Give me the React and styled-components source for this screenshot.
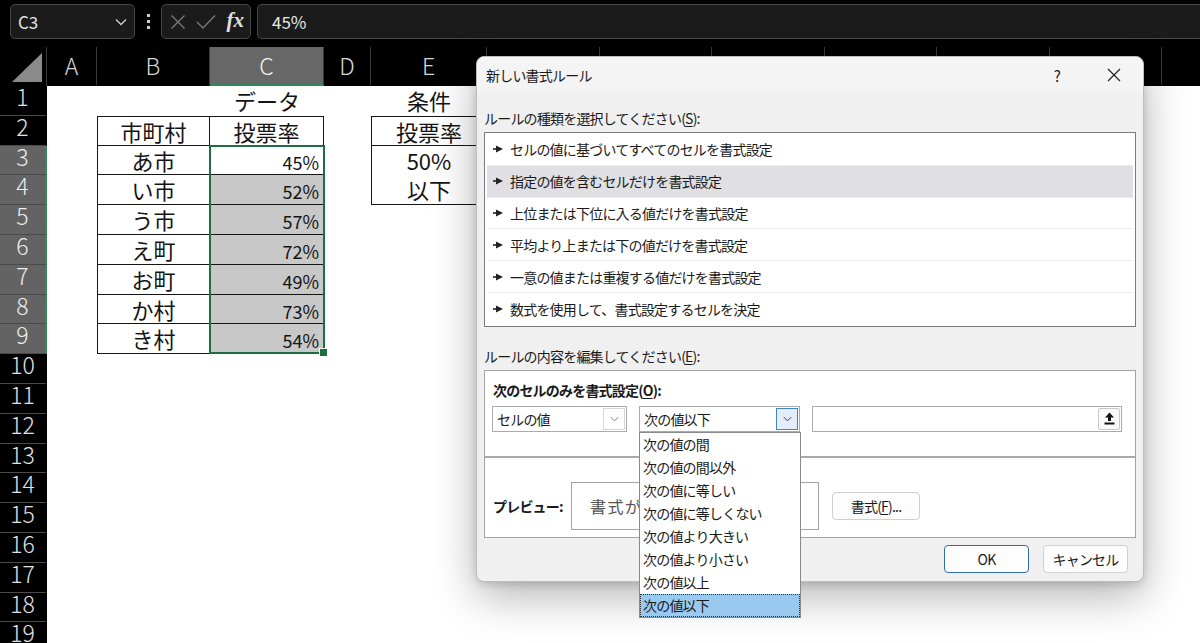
import React from 'react'
import styled, { createGlobalStyle } from 'styled-components'

const GlobalStyle = createGlobalStyle`
  html, body {
    margin: 0;
    padding: 0;
    background: #000;
    overflow: hidden;
  }
  * { box-sizing: border-box; }
`

const COL_TEMPLATE = '47px 50px 113px 114px 47px 116px repeat(7, 112.5px)'
const ROW_H = 29.8

const Page = styled.div`
  position: relative;
  width: 1200px;
  height: 643px;
  overflow: hidden;
  background: #000;
  font-family: "Noto Sans CJK JP", "Noto Sans", sans-serif;
`

/* ---------- formula bar ---------- */

const FormulaBar = styled.div`
  display: flex;
  align-items: stretch;
  height: 47px;
  padding: 4px 0 8px 10px;
`

const NameBox = styled.div`
  width: 125px;
  display: flex;
  align-items: center;
  justify-content: space-between;
  padding: 0 7px 0 7px;
  background: #1b1b1b;
  border: 1px solid #474747;
  border-radius: 5px;
  color: #e6e6e6;
  font-size: 17px;
`

const Dots = styled.div`
  width: 26px;
  display: flex;
  flex-direction: column;
  align-items: center;
  justify-content: center;
  gap: 3px;

  span {
    width: 3px;
    height: 3px;
    background: #cfcfcf;
  }
`

const FxBox = styled.div`
  width: 90px;
  display: flex;
  align-items: center;
  justify-content: space-between;
  padding: 0 6px 0 8px;
  background: #1b1b1b;
  border: 1px solid #474747;
  border-radius: 5px;
`

const Fx = styled.span`
  font-family: "Liberation Serif", "DejaVu Serif", serif;
  font-style: italic;
  font-weight: bold;
  font-size: 21px;
  color: #e0e0e0;
  line-height: 1;
  padding-bottom: 3px;
`

const FormulaInput = styled.div`
  flex: 1;
  margin-left: 6px;
  display: flex;
  align-items: center;
  padding-left: 14px;
  background: #1b1b1b;
  border: 1px solid #474747;
  border-right: 0;
  border-radius: 5px 0 0 5px;
  color: #e6e6e6;
  font-size: 17px;
`

/* ---------- sheet ---------- */

const HeaderRow = styled.div`
  display: grid;
  grid-template-columns: ${COL_TEMPLATE};
  grid-template-rows: 39px;
  height: 39px;
`

const Corner = styled.div`
  display: flex;
  align-items: flex-end;
  justify-content: flex-end;
  padding: 0 3px 3px 0;
  border-right: 1px solid #3a3a3a;
`

const ColHead = styled.div`
  text-align: center;
  font-size: 23px;
  font-weight: 300;
  line-height: 36px;
  color: ${p => (p.$sel ? '#f2f2f2' : '#d8d8d8')};
  background: ${p => (p.$sel ? '#676767' : '#000')};
  border-right: 1px solid #3a3a3a;
  border-bottom: 2px solid ${p => (p.$sel ? '#2f8a58' : '#000')};
`

const SheetRow = styled.div`
  display: grid;
  grid-template-columns: ${COL_TEMPLATE};
  grid-template-rows: ${ROW_H}px;
  height: ${ROW_H}px;
`

const RowHead = styled.div`
  min-height: 0;
  text-align: center;
  font-size: 23px;
  font-weight: 300;
  line-height: 21px;
  color: ${p => (p.$sel ? '#ececec' : '#e2e2e2')};
  background: ${p => (p.$sel ? '#636363' : '#000')};
  border-bottom: 1px solid #4a4a4a;
  border-right: 2px solid ${p => (p.$sel ? '#2f8a58' : '#000')};
  overflow: hidden;
`

const line = '1px solid #151515'

const Cell = styled.div`
  position: relative;
  min-height: 0;
  background: ${p => (p.$fill ? '#c8c8c8' : '#fff')};
  border-top: ${p => (p.$t ? line : '0')};
  border-right: ${p => (p.$r ? line : '0')};
  border-bottom: ${p => (p.$b ? line : '0')};
  border-left: ${p => (p.$l ? line : '0')};
  font-size: ${p => (p.$num ? '18px' : '22px')};
  text-align: ${p => p.$align || 'center'};
  padding: ${p => (p.$num ? '3px 4px 0 3px' : '1px 0 0')};
  line-height: 27px;
  white-space: nowrap;
  color: #141414;
`

const SelectionFrame = styled.div`
  position: absolute;
  left: -1px;
  top: -1px;
  width: 116px;
  height: ${ROW_H * 7 + 1}px;
  border: 2px solid #1f6e43;
  pointer-events: none;
  z-index: 1;

  &::after {
    content: '';
    position: absolute;
    right: -5px;
    bottom: -5px;
    width: 7px;
    height: 7px;
    background: #1f6e43;
    border: 1px solid #fff;
  }
`

/* ---------- dialog ---------- */

const Dialog = styled.div`
  position: absolute;
  left: 476px;
  top: 56px;
  width: 668px;
  height: 526px;
  display: flex;
  flex-direction: column;
  background: #f0f0f0;
  border: 1px solid #bdbdbd;
  border-radius: 8px;
  box-shadow: 0 14px 44px rgba(0, 0, 0, 0.3), 0 2px 8px rgba(0, 0, 0, 0.15);
  font-family: "Noto Sans CJK JP", "Noto Sans", sans-serif;
  font-size: 14px;
  letter-spacing: -0.8px;
  color: #1a1a1a;
  z-index: 3;
`

const TitleBar = styled.div`
  height: 36px;
  display: flex;
  align-items: center;
  padding-left: 9px;
  padding-right: 6px;
  background: #f4f4f4;
  border-radius: 8px 8px 0 0;
`

const Title = styled.div`
  flex: 1;
`

const TitleButton = styled.div`
  width: 46px;
  height: 30px;
  display: flex;
  align-items: center;
  justify-content: center;
  font-size: 15px;
  margin-left: ${p => (p.$gap ? '11px' : '0')};
`

const Body = styled.div`
  flex: 1;
  display: flex;
  flex-direction: column;
  padding: 0 7px;
`

const Label = styled.div`
  line-height: 20px;
  margin-top: ${p => p.$mt}px;
  margin-bottom: 4px;

  u { text-underline-offset: 2px; }
`

const RuleList = styled.div`
  background: #fff;
  border: 1px solid #7c7c7c;
  padding: 1px 2px;
`

const RuleRow = styled.div`
  height: 31.8px;
  display: flex;
  align-items: center;
  gap: 7px;
  padding-left: 6px;
  background: ${p => (p.$active ? '#dfdfe4' : '#fff')};
  border-bottom: ${p => (p.$last ? '0' : '1px solid #ececec')};
`

const EditBox = styled.div`
  background: #fff;
  border: 1px solid #a3a3a3;
`

const EditTop = styled.div`
  padding: 9px 13px 24px 7px;
`

const Heading = styled.div`
  font-weight: bold;
  line-height: 20px;
  margin-left: 1px;

  u { text-underline-offset: 2px; }
`

const SelectRow = styled.div`
  display: flex;
  gap: 12px;
  margin-top: 6px;
`

const Select = styled.div`
  position: relative;
  width: ${p => p.$w}px;
  height: 26px;
  display: flex;
  align-items: stretch;
  background: #fff;
  border: 1px solid #ababab;
`

const SelectText = styled.div`
  flex: 1;
  display: flex;
  align-items: center;
  padding-left: 4px;
`

const SelectButton = styled.div`
  width: 22px;
  margin: 1px;
  display: flex;
  align-items: center;
  justify-content: center;
  border: 1px solid ${p => (p.$active ? '#3f86c4' : '#d6d6d6')};
  background: ${p => (p.$active ? '#e3eefa' : '#fff')};
`

const RefInput = styled.div`
  flex: 1;
  height: 26px;
  display: flex;
  justify-content: flex-end;
  background: #fff;
  border: 1px solid #ababab;
`

const RefButton = styled.div`
  width: 22px;
  margin: 1px;
  display: flex;
  align-items: center;
  justify-content: center;
  background: #fafafa;
  border: 1px solid #c9c9c9;
  border-radius: 2px;
`

const DropList = styled.div`
  position: absolute;
  left: -1px;
  top: 25px;
  width: 162px;
  background: #fff;
  border: 1px solid #8a8a8a;
  z-index: 2;
`

const DropItem = styled.div`
  height: 23px;
  line-height: 23px;
  padding-left: 3px;
  white-space: nowrap;
  background: ${p => (p.$active ? '#99c9ef' : '#fff')};
  outline: ${p => (p.$active ? '1px dotted #333' : 'none')};
  outline-offset: -1px;
`

const EditBottom = styled.div`
  display: flex;
  align-items: center;
  padding: 24px 0 7px 8px;
  border-top: 2px solid #a9a9a9;
`

const PreviewLabel = styled.div`
  width: 78px;
  font-weight: bold;
`

const PreviewBox = styled.div`
  width: 248px;
  height: 48px;
  display: flex;
  align-items: center;
  padding-left: 18px;
  border: 1px solid #a3a3a3;
  font-size: 16px;
  letter-spacing: 1.5px;
  color: #555;
  white-space: nowrap;
  overflow: hidden;
`

const Button = styled.div`
  width: ${p => p.$w || 85}px;
  height: 28px;
  display: flex;
  align-items: center;
  justify-content: center;
  margin-left: ${p => p.$ml || 0}px;
  background: #fdfdfd;
  border: 1px solid ${p => (p.$primary ? '#2f6ea6' : '#d0d0d0')};
  border-radius: 4px;

  u { text-underline-offset: 2px; }
`

const Footer = styled.div`
  display: flex;
  justify-content: flex-end;
  gap: 14px;
  margin-top: 7px;
  padding-right: 8px;
`

/* ---------- icons ---------- */

const Chevron = ({ color = '#d0d0d0', w = 12, h = 8 }) => (
  <svg width={w} height={h} viewBox="0 0 12 8">
    <path d="M1 1.5 L6 6.5 L11 1.5" stroke={color} strokeWidth="1.3" fill="none" />
  </svg>
)

const RuleArrow = () => (
  <svg width="10" height="8" viewBox="0 0 10 8">
    <path d="M0 4 H5" stroke="#222" strokeWidth="1.6" />
    <path d="M3 0.4 L10 4 L3 7.6 Z" fill="#222" />
  </svg>
)

const UploadIcon = () => (
  <svg width="11" height="13" viewBox="0 0 11 13">
    <path d="M5.5 0.5 L10 5.5 H7 V9 H4 V5.5 H1 Z" fill="#111" />
    <rect x="0.5" y="10.5" width="10" height="2" fill="#111" />
  </svg>
)

/* ---------- data ---------- */

const COLS = ['A', 'B', 'C', 'D', 'E', 'F', 'G', 'H', 'I', 'J', 'K', 'L']

const DATA = [
  ['あ市', '45%'],
  ['い市', '52%'],
  ['う市', '57%'],
  ['え町', '72%'],
  ['お町', '49%'],
  ['か村', '73%'],
  ['き村', '54%'],
]

const RULES = [
  'セルの値に基づいてすべてのセルを書式設定',
  '指定の値を含むセルだけを書式設定',
  '上位または下位に入る値だけを書式設定',
  '平均より上または下の値だけを書式設定',
  '一意の値または重複する値だけを書式設定',
  '数式を使用して、書式設定するセルを決定',
]

const OPERATORS = [
  '次の値の間',
  '次の値の間以外',
  '次の値に等しい',
  '次の値に等しくない',
  '次の値より大きい',
  '次の値より小さい',
  '次の値以上',
  '次の値以下',
]

function renderRow(n) {
  const sel = n >= 3 && n <= 9
  const blanks = Array.from({ length: 7 }, (_, i) => <Cell key={'x' + i} />)
  let b = <Cell />
  let c = <Cell />
  let e = <Cell />

  if (n === 1) {
    c = <Cell>データ</Cell>
    e = <Cell>条件</Cell>
  } else if (n === 2) {
    b = <Cell $t $r $b $l>市町村</Cell>
    c = <Cell $t $r $b>投票率</Cell>
    e = <Cell $t $r $b $l>投票率</Cell>
  } else if (sel) {
    const [name, pct] = DATA[n - 3]
    b = <Cell $r $b $l>{name}</Cell>
    c = (
      <Cell $r $b $num $align="right" $fill={n !== 3}>
        {pct}
        {n === 3 && <SelectionFrame />}
      </Cell>
    )
    if (n === 3) e = <Cell $l $r>50%</Cell>
    if (n === 4) e = <Cell $l $r $b>以下</Cell>
  }

  return (
    <SheetRow key={n}>
      <RowHead $sel={sel}>{n}</RowHead>
      <Cell />
      {b}
      {c}
      <Cell />
      {e}
      {blanks}
    </SheetRow>
  )
}

export default function App() {
  return (
    <Page>
      <GlobalStyle />

      <FormulaBar>
        <NameBox>
          <span>C3</span>
          <Chevron />
        </NameBox>
        <Dots><span /><span /><span /></Dots>
        <FxBox>
          <svg width="16" height="16" viewBox="0 0 16 16">
            <path d="M1.5 1.5 L14.5 14.5 M14.5 1.5 L1.5 14.5" stroke="#7a7a7a" strokeWidth="1.3" />
          </svg>
          <svg width="20" height="15" viewBox="0 0 20 15">
            <path d="M1 8 L7 14 L19 1.5" stroke="#7a7a7a" strokeWidth="1.3" fill="none" />
          </svg>
          <Fx>fx</Fx>
        </FxBox>
        <FormulaInput>45%</FormulaInput>
      </FormulaBar>

      <HeaderRow>
        <Corner>
          <svg width="31" height="30" viewBox="0 0 31 30">
            <path d="M0 29 L30 0 L30 29 Z" fill="#8a8a8a" />
          </svg>
        </Corner>
        {COLS.map(c => (
          <ColHead key={c} $sel={c === 'C'}>{c}</ColHead>
        ))}
      </HeaderRow>

      {Array.from({ length: 19 }, (_, i) => renderRow(i + 1))}

      <Dialog>
        <TitleBar>
          <Title>新しい書式ルール</Title>
          <TitleButton>?</TitleButton>
          <TitleButton $gap>
            <svg width="14" height="14" viewBox="0 0 14 14">
              <path d="M1 1 L13 13 M13 1 L1 13" stroke="#222" strokeWidth="1.2" />
            </svg>
          </TitleButton>
        </TitleBar>

        <Body>
          <Label $mt={15}>ルールの種類を選択してください(<u>S</u>):</Label>
          <RuleList>
            {RULES.map((r, i) => (
              <RuleRow key={r} $active={i === 1} $last={i === RULES.length - 1}>
                <RuleArrow />
                <span>{r}</span>
              </RuleRow>
            ))}
          </RuleList>

          <Label $mt={19}>ルールの内容を編集してください(<u>E</u>):</Label>
          <EditBox>
            <EditTop>
              <Heading>次のセルのみを書式設定(<u>O</u>):</Heading>
              <SelectRow>
                <Select $w={135}>
                  <SelectText>セルの値</SelectText>
                  <SelectButton>
                    <Chevron color="#777" w={9} h={6} />
                  </SelectButton>
                </Select>
                <Select $w={161}>
                  <SelectText>次の値以下</SelectText>
                  <SelectButton $active>
                    <Chevron color="#333" w={9} h={6} />
                  </SelectButton>
                  <DropList>
                    {OPERATORS.map((o, i) => (
                      <DropItem key={o} $active={i === OPERATORS.length - 1}>{o}</DropItem>
                    ))}
                  </DropList>
                </Select>
                <RefInput>
                  <RefButton>
                    <UploadIcon />
                  </RefButton>
                </RefInput>
              </SelectRow>
            </EditTop>
            <EditBottom>
              <PreviewLabel>プレビュー:</PreviewLabel>
              <PreviewBox>書式が設定されていません</PreviewBox>
              <Button $w={88} $ml={13}>書式(<u>F</u>)...</Button>
            </EditBottom>
          </EditBox>

          <Footer>
            <Button $primary>OK</Button>
            <Button>キャンセル</Button>
          </Footer>
        </Body>
      </Dialog>
    </Page>
  )
}
